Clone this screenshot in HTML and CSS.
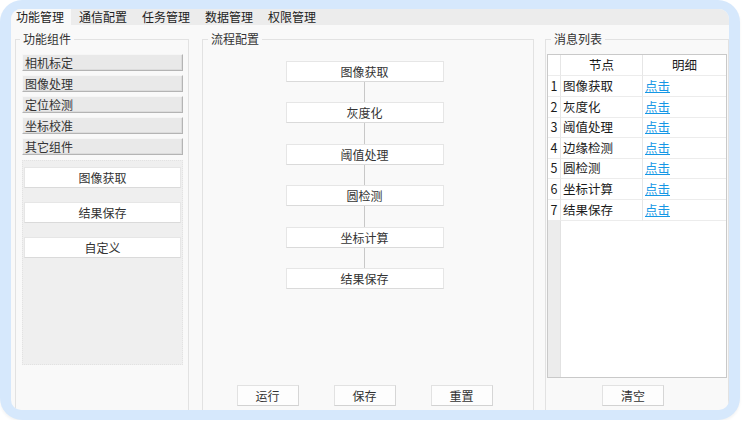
FILE: index.html
```html
<!DOCTYPE html>
<html lang="zh-CN">

<head>
    <meta charset="UTF-8">
    <meta name="viewport" content="width=device-width, initial-scale=1.0">
    <title>流程配置</title>
    <link rel="stylesheet" href="styles.css">
</head>

<body>
    <div class="frame">
        <div class="window">
            <ul class="tabs">
                <li class="active">功能管理</li>
                <li>通信配置</li>
                <li>任务管理</li>
                <li>数据管理</li>
                <li>权限管理</li>
            </ul>
            <div class="panes">
                <div class="group group-tools">
                    <span class="group-title">功能组件</span>
                    <div class="tool-buttons">
                        <button>相机标定</button>
                        <button>图像处理</button>
                        <button>定位检测</button>
                        <button>坐标校准</button>
                        <button>其它组件</button>
                    </div>
                    <ul class="tool-list">
                        <li>图像获取</li>
                        <li>结果保存</li>
                        <li>自定义</li>
                    </ul>
                </div>
                <div class="group group-flow">
                    <span class="group-title">流程配置</span>
                    <div class="flow">
                        <div class="step">图像获取</div>
                        <div class="link"></div>
                        <div class="step">灰度化</div>
                        <div class="link"></div>
                        <div class="step">阈值处理</div>
                        <div class="link"></div>
                        <div class="step">圆检测</div>
                        <div class="link"></div>
                        <div class="step">坐标计算</div>
                        <div class="link"></div>
                        <div class="step">结果保存</div>
                    </div>
                    <div class="actions">
                        <button class="btn">运行</button>
                        <button class="btn">保存</button>
                        <button class="btn">重置</button>
                    </div>
                </div>
                <div class="group group-msg">
                    <span class="group-title">消息列表</span>
                    <div class="msg-table">
                        <div class="row head"><span></span><span>节点</span><span>明细</span></div>
                        <div class="row"><span>1</span><span>图像获取</span><span><a href="#">点击</a></span></div>
                        <div class="row"><span>2</span><span>灰度化</span><span><a href="#">点击</a></span></div>
                        <div class="row"><span>3</span><span>阈值处理</span><span><a href="#">点击</a></span></div>
                        <div class="row"><span>4</span><span>边缘检测</span><span><a href="#">点击</a></span></div>
                        <div class="row"><span>5</span><span>圆检测</span><span><a href="#">点击</a></span></div>
                        <div class="row"><span>6</span><span>坐标计算</span><span><a href="#">点击</a></span></div>
                        <div class="row"><span>7</span><span>结果保存</span><span><a href="#">点击</a></span></div>
                    </div>
                    <button class="btn clear">清空</button>
                </div>
            </div>
        </div>
    </div>
</body>

</html>
```

FILE: styles.css
```css
* {
    box-sizing: border-box;
}

body {
    margin: 0;
    background: #fff;
    font-family: "Noto Sans CJK SC", sans-serif;
    font-size: 12px;
    color: #333;
}

button {
    font-family: inherit;
    font-size: 12px;
    color: #333;
    margin: 0;
    padding: 0;
    cursor: pointer;
}

.frame {
    width: 740px;
    height: 420px;
    padding: 9px 11px 10px;
    background: #d6e8fc;
    border-radius: 22px;
    box-shadow: 0 2px 3px rgba(0, 0, 0, 0.05);
}

.window {
    height: 100%;
    background: #f9f9f9;
    border-radius: 10px;
    overflow: hidden;
    display: flex;
    flex-direction: column;
}

/* tab strip */
.tabs {
    display: flex;
    flex-shrink: 0;
    margin: 0;
    padding: 0;
    list-style: none;
    height: 16px;
    background: #ececec;
}

.tabs li {
    width: 63px;
    padding-left: 5px;
    line-height: 16px;
    color: #222;
}

.tabs li.active {
    background: linear-gradient(to right, #f9f9f9 60px, transparent 60px);
}

.panes {
    flex: 1;
    display: flex;
    padding-left: 4px;
    min-height: 0;
}

/* group boxes */
.group {
    margin-top: 14px;
    border: 1px solid #e2e2e2;
    border-bottom: 0;
    display: flex;
    flex-direction: column;
}

.group-title {
    align-self: flex-start;
    margin: -8px 0 0 5px;
    padding: 0 3px;
    line-height: 14px;
    background: #f9f9f9;
    color: #333;
}

.group-tools {
    width: 174px;
    margin-right: 13px;
    padding: 0 5px 0 6px;
}

.group-tools .group-title {
    margin-left: -2px;
}

.group-flow {
    width: 332px;
    margin-right: 11px;
    padding: 0 7px 0 0;
}

.group-msg {
    width: 184px;
    padding: 0 1px;
}

.group-msg .group-title {
    margin-left: 4px;
}

/* left side */
.tool-buttons {
    margin-top: 8px;
    display: flex;
    flex-direction: column;
    gap: 4px;
}

.tool-buttons button {
    height: 17px;
    text-align: left;
    padding-left: 2px;
    background: #e9e9e9;
    border: 1px solid;
    border-color: #f6f6f6 #b4b4b4 #b4b4b4 #f6f6f6;
    box-shadow: inset -1px -1px #dcdcdc;
    line-height: 14px;
}

.tool-list {
    list-style: none;
    margin: 5px 0 0;
    padding: 6px 1px 0;
    height: 205px;
    background: #efefef;
    border: 1px dotted #e2e2e2;
}

.tool-list li {
    height: 21px;
    line-height: 19px;
    margin-bottom: 14px;
    text-align: center;
    background: #fff;
    border: 1px solid #e6e6e6;
    border-bottom-color: #dadada;
}

/* flow */
.flow {
    margin-top: 15px;
    display: flex;
    flex-direction: column;
    align-items: center;
}

.step {
    width: 158px;
    height: 21px;
    line-height: 19px;
    text-align: center;
    background: #fff;
    border: 1px solid #e6e6e6;
    border-bottom-color: #dadada;
}

.link {
    width: 1px;
    height: 20.4px;
    background: #c8c8c8;
}

.actions {
    margin-top: auto;
    margin-bottom: 4px;
    display: flex;
    justify-content: center;
    gap: 35px;
}

.btn {
    width: 62px;
    height: 21px;
    background: #fdfdfd;
    border: 1px solid #e2e2e2;
    border-bottom-color: #d2d2d2;
    border-right-color: #d6d6d6;
}

/* message table */
.msg-table {
    margin-top: 8px;
    height: 324px;
    border: 1px solid #c9c9c9;
    background: linear-gradient(to right, #ececec 12px, #e2e2e2 12px, #e2e2e2 13px, #fff 13px);
    font-size: 12.5px;
    color: #1a1a1a;
}

.row {
    display: grid;
    grid-template-columns: 13px 82px 1fr;
    height: 20.6px;
    background: #fff;
}

.row.head {
    height: 21px;
}

.row span {
    line-height: 20px;
    border-bottom: 1px solid #ececec;
    border-right: 1px solid #e6e6e6;
    padding-left: 2px;
}

.row span:first-child {
    text-align: center;
    padding-left: 0;
}

.row span:last-child {
    border-right: 0;
}

.row.head span {
    text-align: center;
    padding-left: 0;
}

.row a {
    color: #1597e5;
}

.clear {
    margin: 7px 0 0 55px;
}
```
